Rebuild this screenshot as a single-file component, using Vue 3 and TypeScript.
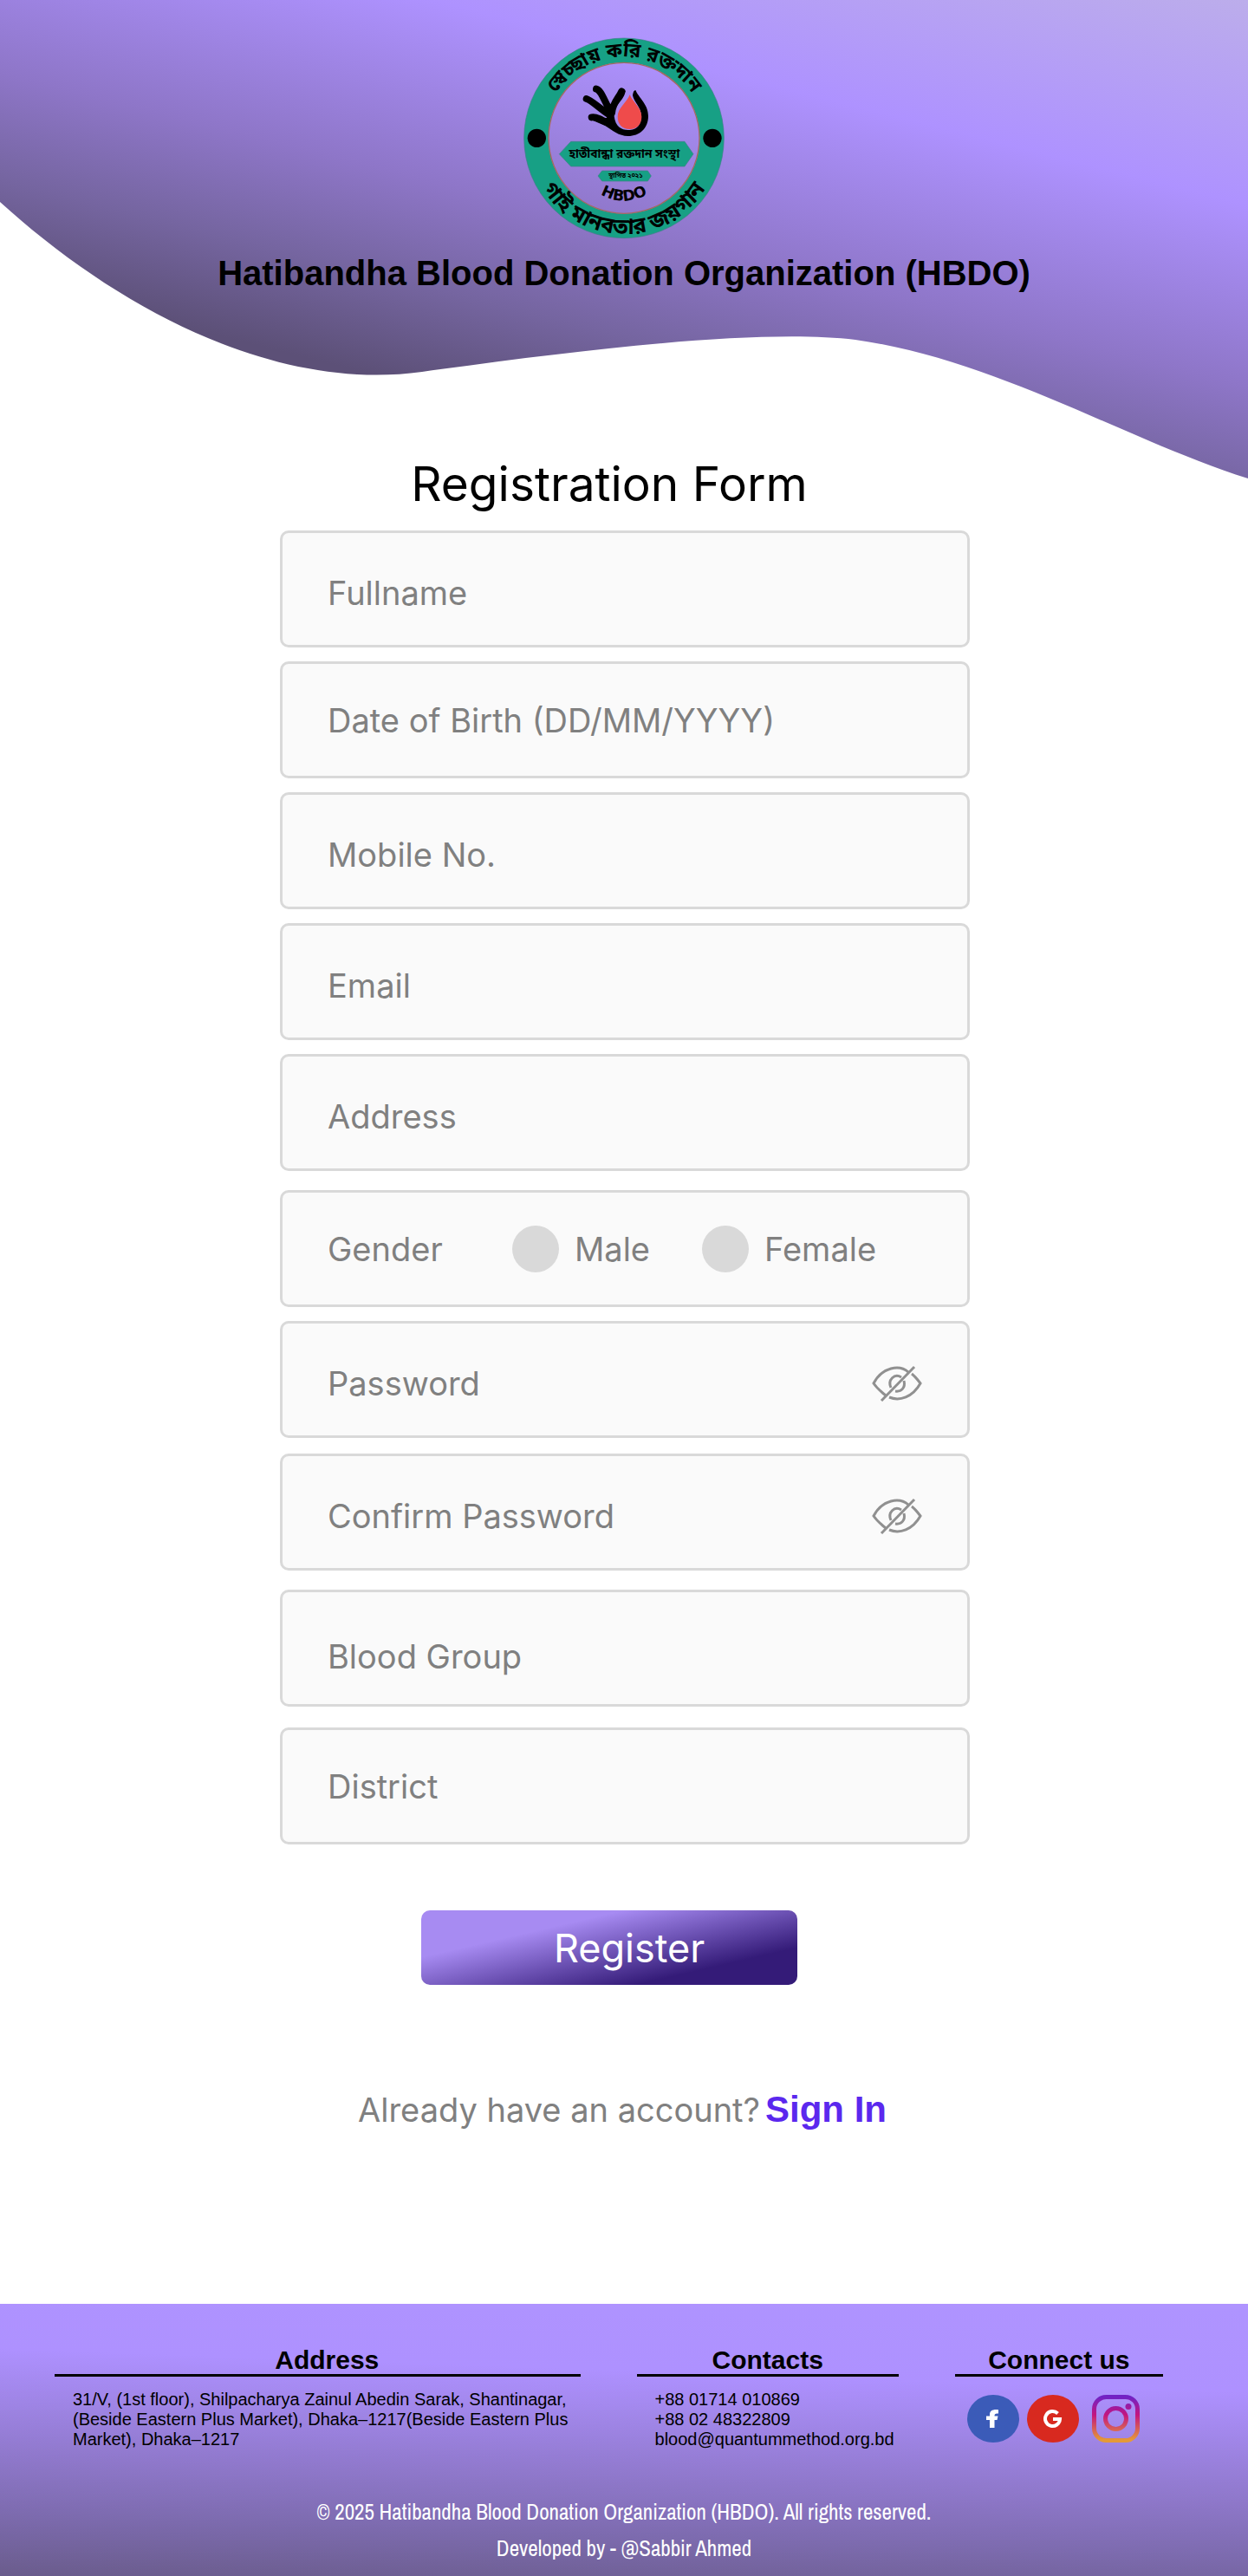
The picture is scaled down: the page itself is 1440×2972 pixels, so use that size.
<script setup lang="ts">
import { reactive, ref } from 'vue'

type Align = 'mid' | 'low' | 'lower'
type Gap = 'none' | 's' | 'm' | 'l' | 'xl'

interface Field {
  key: string
  label: string
  kind: 'text' | 'email' | 'tel' | 'password' | 'gender'
  align: Align
  gap: Gap
}

const fields: Field[] = [
  { key: 'fullname', label: 'Fullname', kind: 'text', align: 'low', gap: 'none' },
  { key: 'dob', label: 'Date of Birth (DD/MM/YYYY)', kind: 'text', align: 'mid', gap: 's' },
  { key: 'mobile', label: 'Mobile No.', kind: 'tel', align: 'low', gap: 's' },
  { key: 'email', label: 'Email', kind: 'email', align: 'low', gap: 's' },
  { key: 'address', label: 'Address', kind: 'text', align: 'low', gap: 's' },
  { key: 'gender', label: 'Gender', kind: 'gender', align: 'mid', gap: 'l' },
  { key: 'password', label: 'Password', kind: 'password', align: 'low', gap: 's' },
  { key: 'confirm', label: 'Confirm Password', kind: 'password', align: 'low', gap: 'm' },
  { key: 'blood', label: 'Blood Group', kind: 'text', align: 'lower', gap: 'l' },
  { key: 'district', label: 'District', kind: 'text', align: 'mid', gap: 'xl' },
]

const form = reactive<Record<string, string>>({})
const visible = reactive<Record<string, boolean>>({})
const sent = ref(false)

function inputType(f: Field): string {
  return f.kind === 'password' && visible[f.key] ? 'text' : f.kind
}
</script>

<template>
  <div class="page">
    <header class="hero">
      <svg class="wave" viewBox="0 0 1440 552" preserveAspectRatio="none" aria-hidden="true">
        <defs>
          <linearGradient id="wave-fill" gradientUnits="userSpaceOnUse" x1="1440" y1="0" x2="1278" y2="645">
            <stop offset="0" stop-color="#bcadeb" />
            <stop offset="0.345" stop-color="#ae92ff" />
            <stop offset="0.65" stop-color="#8e76c8" />
            <stop offset="0.83" stop-color="#7565a0" />
            <stop offset="1" stop-color="#5c5077" />
          </linearGradient>
        </defs>
        <path
          fill="url(#wave-fill)"
          d="M0 0H1440V552C1300 508 1150 415 987 392C880 379 680 402 487 429C320 452 140 360 0 233Z"
        />
      </svg>

      <svg class="logo" viewBox="0 0 780 780" role="img" aria-label="HBDO">
        <defs>
          <path id="arc-top" d="M108 388A282 282 0 0 1 672 388" />
          <path id="arc-bottom" d="M58 388A332 332 0 0 0 722 388" />
          <path id="arc-name" d="M292 572Q390 638 488 572" />
        </defs>
        <circle cx="390" cy="388" r="304" fill="none" stroke="#17a085" stroke-width="84" />
        <circle cx="390" cy="388" r="346" fill="none" stroke="#3f7f86" stroke-width="2" />
        <circle cx="390" cy="388" r="261" fill="none" stroke="#a5695f" stroke-width="4" />
        <circle cx="88" cy="388" r="32" />
        <circle cx="696" cy="388" r="32" />
        <text class="bn" font-size="68">
          <textPath href="#arc-top" startOffset="50%" text-anchor="middle">স্বেচ্ছায় করি রক্তদান</textPath>
        </text>
        <text class="bn" font-size="76">
          <textPath href="#arc-bottom" startOffset="50%" text-anchor="middle">গাই মানবতার জয়গান</textPath>
        </text>
        <g fill="none" stroke="#000" stroke-linecap="round" stroke-linejoin="round">
          <path stroke-width="24" d="M294 218C310 222 318 250 340 290M260 252C280 258 310 290 340 308M278 316C300 312 330 336 352 346M382 226C372 250 352 262 348 300" />
        </g>
        <path d="M330 262L350 280L366 262L396 222C390 262 356 268 356 312C360 350 384 362 410 360C438 358 450 338 450 312C450 282 424 262 420 240Q422 222 430 222C440 248 474 270 474 312C474 354 444 381 404 381C372 381 350 362 326 346L270 322L330 318Z" />
        <path fill="#ef4b4b" d="M410 238C420 264 451 282 451 314C451 340 434 357 410 357C384 357 368 340 368 314C368 284 400 264 410 238Z" />
        <path fill="#17a085" stroke="#3f7f86" stroke-width="2" d="M206 400H600L630 443L600 486H206L166 443Z" />
        <path fill="#17a085" stroke="#3f7f86" stroke-width="2" d="M314 501H472L484 519L472 537H314L300 519Z" />
        <text class="bn" x="391" y="457" font-size="41" text-anchor="middle">হাতীবান্ধা রক্তদান সংস্থা</text>
        <text class="bn" x="396" y="526" font-size="22" text-anchor="middle">স্থাপিত ২০২১</text>
        <text class="abbr" font-size="52">
          <textPath href="#arc-name" startOffset="50%" text-anchor="middle">HBDO</textPath>
        </text>
      </svg>
      <h1 class="org">Hatibandha Blood Donation Organization (HBDO)</h1>
    </header>

    <main class="main">
      <form class="form" @submit.prevent="sent = true">
        <h2 class="form-title">Registration Form</h2>

        <template v-for="f in fields" :key="f.key">
          <div
            v-if="f.kind === 'gender'"
            class="field"
            :class="['gap-' + f.gap, 'text-' + f.align]"
            role="radiogroup"
            aria-labelledby="gender-label"
          >
            <span id="gender-label" class="gender-label">{{ f.label }}</span>
            <label class="choice">
              <input v-model="form.gender" class="radio" type="radio" name="gender" value="male" />
              <span>Male</span>
            </label>
            <label class="choice">
              <input v-model="form.gender" class="radio" type="radio" name="gender" value="female" />
              <span>Female</span>
            </label>
          </div>

          <div v-else class="field" :class="['gap-' + f.gap, 'text-' + f.align]">
            <input
              v-model="form[f.key]"
              class="input"
              :type="inputType(f)"
              :name="f.key"
              :placeholder="f.label"
              :aria-label="f.label"
            />
            <button
              v-if="f.kind === 'password'"
              class="eye"
              type="button"
              aria-label="Show password"
              @click="visible[f.key] = !visible[f.key]"
            >
              <svg viewBox="0 0 58 42" width="58" height="42" fill="none" stroke="#909090" stroke-width="3">
                <path d="M42 8C32 -1 12 2 2 21C6 27 11 31 16 35M46 10C50 13 53 17 56 21C47 37 32 42 20 37" />
                <path d="M34 14C26 9 18 17 22 26M37 18C39 26 34 31 27 30" />
                <path d="M11 41L49 2" />
              </svg>
            </button>
          </div>
        </template>

        <button class="submit" type="submit">Register</button>
      </form>

      <p class="signin"><span>Already have an account?</span><a href="#signin">Sign In</a></p>
    </main>

    <footer class="footer">
      <div class="columns">
        <section>
          <h3 class="col-title col-title--address">Address</h3>
          <p class="col-text">
            31/V, (1st floor), Shilpacharya Zainul Abedin Sarak, Shantinagar, (Beside Eastern Plus Market),
            Dhaka–1217(Beside Eastern Plus Market), Dhaka–1217
          </p>
        </section>
        <section>
          <h3 class="col-title">Contacts</h3>
          <p class="col-text">
            +88 01714 010869<br />+88 02 48322809<br />blood@quantummethod.org.bd
          </p>
        </section>
        <section>
          <h3 class="col-title">Connect us</h3>
          <div class="social">
            <a href="#facebook" aria-label="Facebook">
              <svg viewBox="0 0 60 55" width="60" height="55">
                <ellipse cx="30" cy="27.5" rx="30" ry="27.5" fill="#3b5bb8" />
                <path fill="#fff" d="M26 38V29H22V24.500H26V23C26 18.500 29 16.500 36 17.200V21.500C32.500 21.300 31.500 21.800 31.500 24.500H35.500L34.500 29H31.500V38Z" />
              </svg>
            </a>
            <a href="#google" aria-label="Google">
              <svg viewBox="0 0 60 55" width="60" height="55">
                <ellipse cx="30" cy="27.5" rx="30" ry="27.5" fill="#d8291f" />
                <path fill="none" stroke="#fff" stroke-width="4" d="M35.500 21.500A8.500 8.500 0 1 0 38 28H30" />
              </svg>
            </a>
            <a class="instagram" href="#instagram" aria-label="Instagram">
              <svg viewBox="0 0 55 55" width="55" height="55">
                <defs>
                  <linearGradient id="ig" gradientUnits="userSpaceOnUse" x1="0" y1="0" x2="0" y2="55">
                    <stop offset="0.05" stop-color="#7222c4" />
                    <stop offset="0.42" stop-color="#c4157f" />
                    <stop offset="0.95" stop-color="#e59a37" />
                  </linearGradient>
                </defs>
                <rect x="2.5" y="2.5" width="50" height="50" rx="14" fill="none" stroke="url(#ig)" stroke-width="5" />
                <circle cx="27.5" cy="27.5" r="12" fill="none" stroke="url(#ig)" stroke-width="5" />
                <circle cx="42" cy="13.500" r="3.500" fill="url(#ig)" />
              </svg>
            </a>
          </div>
        </section>
      </div>
      <div class="legal">
        <p>© 2025 Hatibandha Blood Donation Organization (HBDO). All rights reserved.</p>
        <p>Developed by - @Sabbir Ahmed</p>
      </div>
    </footer>
  </div>
</template>

<style>
body {
  background: #fff;
}
</style>

<style scoped>
.page,
.page * {
  box-sizing: border-box;
}
.page {
  position: relative;
  font-family: Inter, sans-serif;
  color: #000;
}
h1,
h2,
h3,
p {
  margin: 0;
}
.hero {
  display: flex;
  flex-direction: column;
  align-items: center;
  gap: 2px;
  padding-top: 30px;
}
.wave {
  position: absolute;
  top: 0;
  left: 0;
  width: 100%;
  height: 552px;
}
.logo {
  position: relative;
  width: 260px;
  height: 260px;
}
.bn {
  font-family: 'Noto Sans Bengali', 'Noto Sans', sans-serif;
  font-weight: 700;
}
.abbr {
  font-family: 'DejaVu Sans', sans-serif;
  font-weight: 700;
}
.org {
  position: relative;
  font: 700 40px/46px 'Liberation Sans', Arial, sans-serif;
  text-align: center;
}
.main {
  position: relative;
  display: flex;
  flex-direction: column;
  align-items: center;
  gap: 120px;
  padding: 188px 18px 200px 20px;
}
.form {
  display: flex;
  flex-direction: column;
  width: 100%;
  max-width: 796px;
}
.form-title {
  margin-bottom: 22px;
  padding-right: 36px;
  font-size: 55px;
  font-weight: 400;
  line-height: 64px;
  text-align: center;
}
.field {
  display: flex;
  align-items: center;
  height: 135px;
  padding: 0 52px;
  border: 3px solid #d9d9d9;
  border-radius: 10px;
  background: #fafafa;
  color: #808080;
  font-size: 38px;
}
.text-low {
  padding-top: 8px;
}
.text-lower {
  padding-top: 18px;
}
.gap-s {
  margin-top: 16px;
}
.gap-m {
  margin-top: 18px;
}
.gap-l {
  margin-top: 22px;
}
.gap-xl {
  margin-top: 24px;
}
.input {
  flex: 1;
  min-width: 0;
  height: 100%;
  padding: 0;
  border: 0;
  outline: 0;
  background: transparent;
  color: #808080;
  font: inherit;
}
.input::placeholder {
  color: #808080;
  opacity: 1;
}
.gender-label {
  width: 213px;
}
.choice {
  display: flex;
  align-items: center;
  gap: 18px;
}
.choice + .choice {
  margin-left: 60px;
}
.radio {
  appearance: none;
  width: 54px;
  height: 54px;
  margin: 0;
  border-radius: 50%;
  background: #d9d9d9;
}
.radio:checked {
  background: #a78bf2;
}
.eye {
  display: flex;
  padding: 0;
  border: 0;
  background: none;
  cursor: pointer;
}
.submit {
  align-self: center;
  width: 434px;
  height: 86px;
  margin: 76px 36px 0 0;
  padding: 2px 0 0 46px;
  border: 0;
  border-radius: 10px;
  background: linear-gradient(167deg, #a78bf2 29%, #341b78 77%);
  color: #fff;
  font: 400 45px/54px Inter, sans-serif;
  cursor: pointer;
}
.signin {
  display: flex;
  align-items: baseline;
  gap: 6px;
  padding-right: 6px;
  color: #808080;
  font-size: 38px;
  line-height: 48px;
}
.signin a {
  color: #5b28ee;
  font: 700 42px/48px 'Liberation Sans', Arial, sans-serif;
  text-decoration: none;
}
.footer {
  padding: 49px 0 11px;
  background: linear-gradient(182deg, #af94ff 0%, #ae91ff 28%, #8f78cb 62%, #7d6baf 80%, #6a5c8c 100%);
  font-family: 'Liberation Sans', Arial, sans-serif;
}
.columns {
  display: grid;
  grid-template-columns: 606fr 302fr 240fr;
  gap: 65px;
  padding: 0 98px 0 63px;
}
.col-title {
  border-bottom: 3px solid #000;
  font-size: 30px;
  line-height: 32px;
  text-align: center;
}
.col-title--address {
  padding-left: 22px;
}
.col-text {
  padding: 15px 0 0 21px;
  margin-right: -12px;
  font-size: 20px;
  line-height: 23px;
}
.social {
  display: flex;
  gap: 9px;
  padding: 21px 0 0 14px;
}
.social a,
.social svg {
  display: block;
}
.instagram {
  margin-left: 6px;
}
.legal {
  margin-top: 51px;
  color: #fff;
  font-family: 'Archivo Narrow', 'Liberation Sans Narrow', 'Liberation Sans', sans-serif;
  font-size: 25px;
  line-height: 42px;
  text-align: center;
}
</style>
